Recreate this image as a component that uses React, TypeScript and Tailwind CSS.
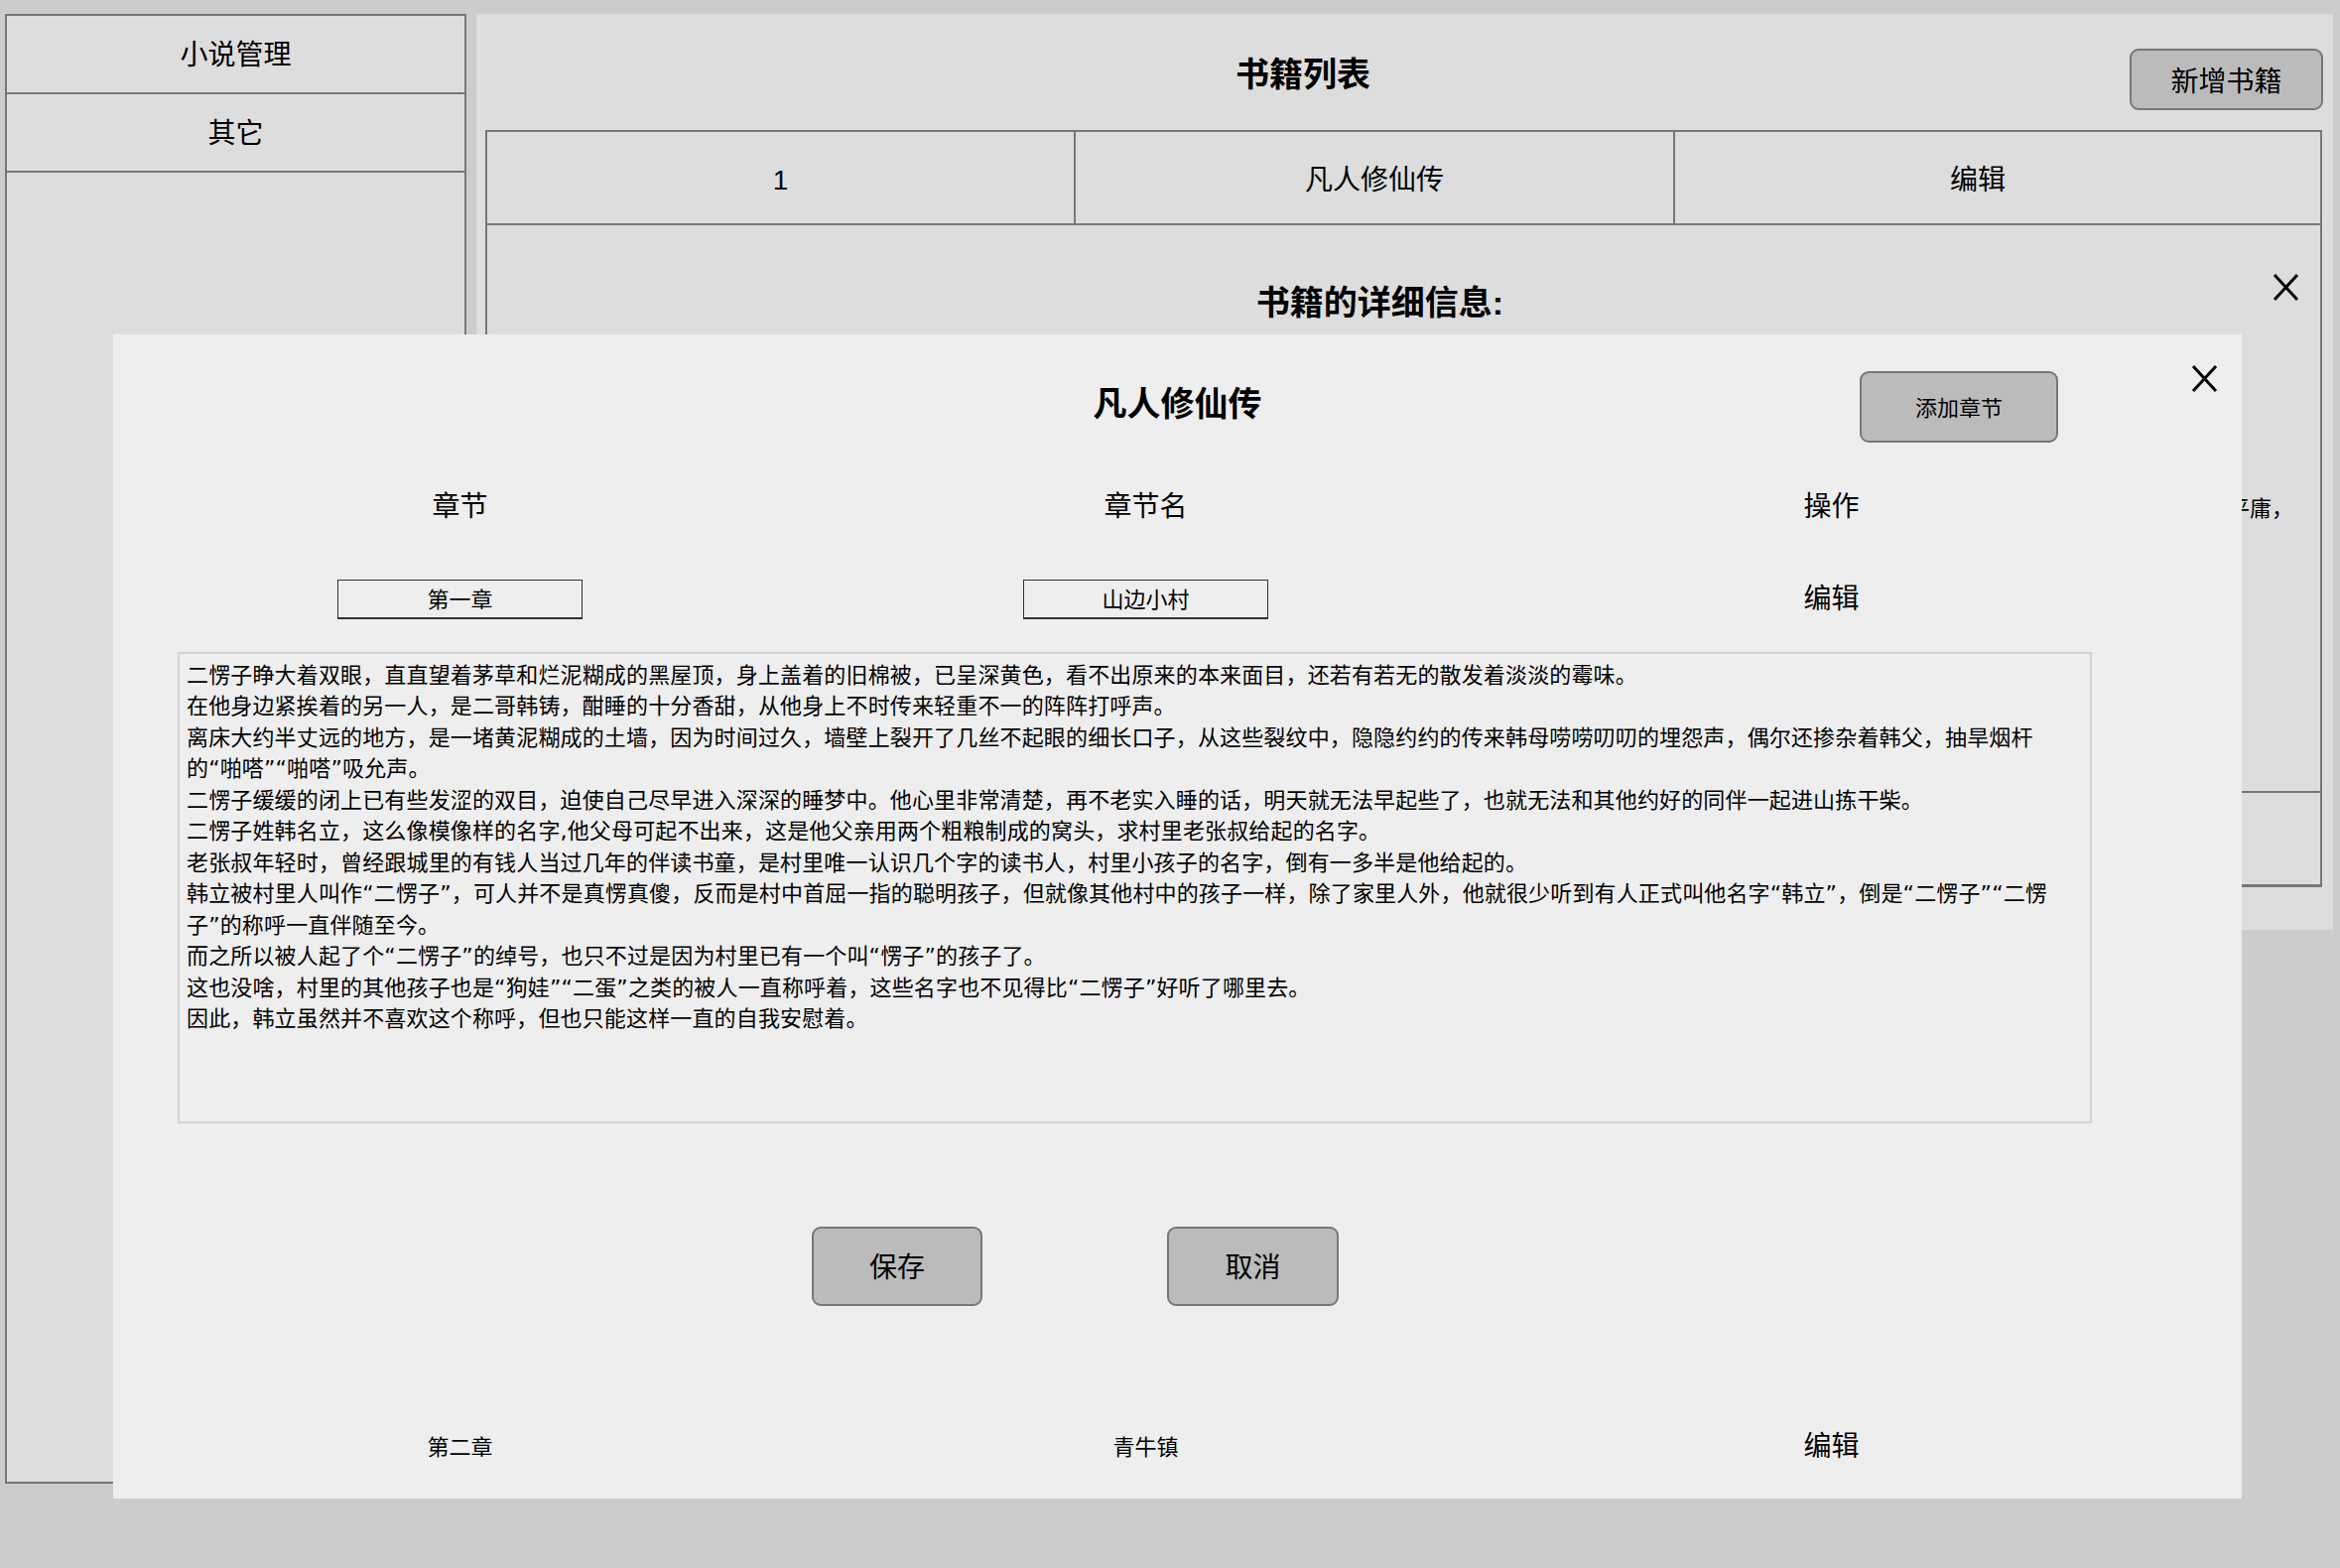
import React from 'react';

const CloseIcon = () => (
  <svg width="27" height="27" viewBox="0 0 27 27" className="block">
    <path d="M2 1 L25 26 M25 1 L2 26" stroke="#000" strokeWidth="3" fill="none" />
  </svg>
);

const chapterText = [
  '二愣子睁大着双眼，直直望着茅草和烂泥糊成的黑屋顶，身上盖着的旧棉被，已呈深黄色，看不出原来的本来面目，还若有若无的散发着淡淡的霉味。',
  '在他身边紧挨着的另一人，是二哥韩铸，酣睡的十分香甜，从他身上不时传来轻重不一的阵阵打呼声。',
  '离床大约半丈远的地方，是一堵黄泥糊成的土墙，因为时间过久，墙壁上裂开了几丝不起眼的细长口子，从这些裂纹中，隐隐约约的传来韩母唠唠叨叨的埋怨声，偶尔还掺杂着韩父，抽旱烟杆',
  '的“啪嗒”“啪嗒”吸允声。',
  '二愣子缓缓的闭上已有些发涩的双目，迫使自己尽早进入深深的睡梦中。他心里非常清楚，再不老实入睡的话，明天就无法早起些了，也就无法和其他约好的同伴一起进山拣干柴。',
  '二愣子姓韩名立，这么像模像样的名字,他父母可起不出来，这是他父亲用两个粗粮制成的窝头，求村里老张叔给起的名字。',
  '老张叔年轻时，曾经跟城里的有钱人当过几年的伴读书童，是村里唯一认识几个字的读书人，村里小孩子的名字，倒有一多半是他给起的。',
  '韩立被村里人叫作“二愣子”，可人并不是真愣真傻，反而是村中首屈一指的聪明孩子，但就像其他村中的孩子一样，除了家里人外，他就很少听到有人正式叫他名字“韩立”，倒是“二愣子”“二愣',
  '子”的称呼一直伴随至今。',
  '而之所以被人起了个“二愣子”的绰号，也只不过是因为村里已有一个叫“愣子”的孩子了。',
  '这也没啥，村里的其他孩子也是“狗娃”“二蛋”之类的被人一直称呼着，这些名字也不见得比“二愣子”好听了哪里去。',
  '因此，韩立虽然并不喜欢这个称呼，但也只能这样一直的自我安慰着。',
];

export default function App() {
  return (
    <div className="relative w-[2358px] h-[1580px] overflow-hidden bg-[#cccccc] text-black font-[family-name:'Liberation_Sans','Noto_Sans_CJK_SC',sans-serif]">
      <div className="flex items-start gap-[10px] pt-[14px] pl-[5px]">
        {/* Sidebar */}
        <aside className="w-[465px] h-[1481px] border-2 border-[#777] bg-[#dddddd]">
          <div className="h-[79px] pt-[3px] flex items-center justify-center border-b-2 border-[#777] text-[28px]">小说管理</div>
          <div className="h-[79px] pt-[3px] flex items-center justify-center border-b-2 border-[#777] text-[28px]">其它</div>
        </aside>

        {/* Book list panel */}
        <main className="w-[1871px] h-[923px] bg-[#dddddd] flex flex-col">
          <div className="h-[117px] flex items-start">
            <h1 className="flex-1 text-center mt-[44px] text-[34px] leading-[34px] font-bold">书籍列表</h1>
            <button className="mt-[35px] mr-[10px] w-[195px] h-[62px] pt-[5px] rounded-[9px] border-2 border-[#777] bg-[#bbbbbb] text-[28px]">
              新增书籍
            </button>
          </div>

          <div className="ml-[9px] w-[1851px] border-2 border-b-[3px] border-[#777]">
            <div className="grid grid-cols-[593px_604px_610px_1fr] h-[94px] border-b-2 border-[#777] text-[28px]">
              <div className="flex items-center justify-center pt-[5px] border-r-2 border-[#777]">1</div>
              <div className="flex items-center justify-center pt-[5px] border-r-2 border-[#777]">凡人修仙传</div>
              <div className="flex items-center justify-center pt-[5px]">编辑</div>
              <div />
            </div>

            <div className="h-[572px] border-b-2 border-[#777] flex flex-col">
              <div className="flex items-start">
                <h2 className="flex-1 text-center mt-[61px] text-[34px] leading-[34px] font-bold">书籍的详细信息:</h2>
                <button className="mt-[49px] mr-[21px]">
                  <CloseIcon />
                </button>
              </div>
              <p className="mt-[176px] self-end mr-[27px] whitespace-nowrap text-[22px] leading-[30px]">
                成了一名记名弟子，虽然资质平庸，
              </p>
            </div>

            <div className="h-[92px]" />
          </div>
        </main>
      </div>

      {/* Chapter modal */}
      <div className="absolute left-[114px] top-[337px] w-[2145px] h-[1173px] bg-[#eeeeee]">
        <button className="absolute right-[185px] top-[37px] w-[200px] h-[72px] pt-[2px] rounded-[9px] border-2 border-[#777] bg-[#bbbbbb] text-[22px]">
          添加章节
        </button>
        <button className="absolute right-[24px] top-[31px]">
          <CloseIcon />
        </button>

        <div className="h-[142px] pt-[53px]">
          <h2 className="text-center text-[34px] leading-[34px] font-bold">凡人修仙传</h2>
        </div>

        <div className="grid grid-cols-[691px_691px_691px] pl-[4px] h-[60px] pt-[3px] items-center text-center text-[28px]">
          <div>章节</div>
          <div>章节名</div>
          <div>操作</div>
        </div>

        <div className="grid grid-cols-[691px_691px_691px] pl-[4px] mt-[35px] h-[60px] items-center text-[22px]">
          <div className="flex justify-center">
            <div className="w-[247px] h-[40px] pt-[2px] border border-b-2 border-[#333] flex items-center justify-center">第一章</div>
          </div>
          <div className="flex justify-center">
            <div className="w-[247px] h-[40px] pt-[2px] border border-b-2 border-[#333] flex items-center justify-center">山边小村</div>
          </div>
          <div className="text-center text-[28px]">编辑</div>
        </div>

        <div className="ml-[65px] mt-[23px] w-[1929px] h-[475px] border-2 border-[#d2d2d2] pt-[6px] pl-[7px] text-[22px] leading-[31.45px] tracking-[0.15px] whitespace-nowrap overflow-hidden font-[family-name:'DejaVu_Sans','Noto_Sans_CJK_SC',sans-serif]">
          {chapterText.map((line, i) => (
            <div key={i}>{line}</div>
          ))}
        </div>

        <div className="flex gap-[186px] pl-[704px] mt-[104px]">
          <button className="w-[172px] h-[80px] pt-[3px] rounded-[9px] border-2 border-[#777] bg-[#bbbbbb] text-[28px]">保存</button>
          <button className="w-[173px] h-[80px] pt-[3px] rounded-[9px] border-2 border-[#777] bg-[#bbbbbb] text-[28px]">取消</button>
        </div>

        <div className="grid grid-cols-[691px_691px_691px] pl-[4px] mt-[111px] h-[60px] pt-[2px] items-center text-center text-[22px]">
          <div>第二章</div>
          <div>青牛镇</div>
          <div className="text-[28px]">编辑</div>
        </div>
      </div>
    </div>
  );
}
